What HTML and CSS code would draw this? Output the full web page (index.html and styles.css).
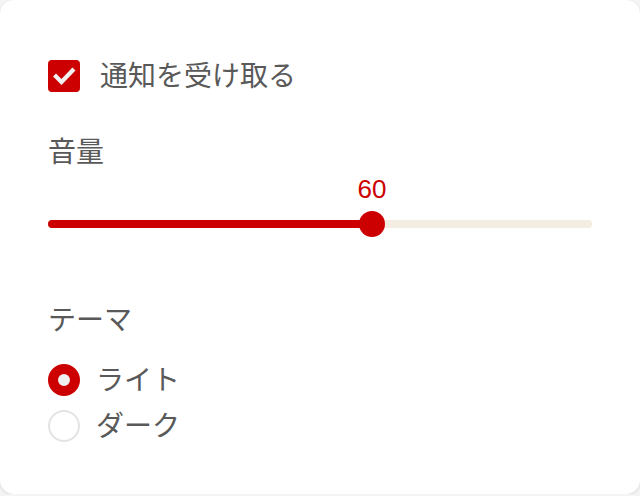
FILE: index.html
```html
<!DOCTYPE html>
<html lang="ja">
<head>
<meta charset="utf-8">
<link rel="stylesheet" href="styles.css">
</head>
<body>
<div class="card">
  <label class="check-row">
    <span class="checkbox">
      <svg viewBox="0 0 32 32" width="32" height="32"><path d="M8 16.5 L13.5 22 L24.5 10.5" fill="none" stroke="#f2f2f2" stroke-width="4.2" stroke-linecap="square"/></svg>
    </span>
    <span class="label">通知を受け取る</span>
  </label>

  <div class="section-title vol-title">音量</div>
  <div class="slider">
    <div class="value" style="margin-left:calc(12px + 0.6 * (100% - 24px))"><span>60</span></div>
    <div class="track">
      <div class="fill" style="width:calc(12px + 0.6 * (100% - 24px))"></div>
      <div class="thumb" style="left:calc(12px + 0.6 * (100% - 24px))"></div>
    </div>
  </div>

  <div class="section-title theme-title">テーマ</div>
  <div class="radios">
    <div class="radio-row"><span class="radio on"></span><span class="label">ライト</span></div>
    <div class="radio-row"><span class="radio"></span><span class="label">ダーク</span></div>
  </div>
</div>
</body>
</html>
```
FILE: styles.css
```css
html, body { margin: 0; padding: 0; }
body {
  background: #f4f4f4;
  font-family: "Noto Sans CJK JP", "Noto Sans", sans-serif;
  color: #595959;
}
.card {
  box-sizing: border-box;
  width: 640px;
  height: 494px;
  background: #fff;
  border-radius: 14px;
  box-shadow: 0 1px 3px rgba(0,0,0,0.12);
  padding: 60px 48px 0 48px;
}
.check-row {
  display: flex;
  align-items: center;
  height: 32px;
  gap: 20px;
}
.checkbox {
  width: 32px; height: 32px;
  border-radius: 4px;
  background: #cc0000;
  display: block;
}
.checkbox svg { display: block; }
.label {
  font-size: 28px;
  line-height: 32px;
  color: #595959;
  position: relative;
  top: -2px;
}
.section-title {
  font-size: 28px;
  line-height: 32px;
  color: #595959;
}
.vol-title { margin-top: 42px; }
.slider { margin-top: 8px; width: 544px; }
.value {
  font-family: "Liberation Sans", Arial, sans-serif;
  color: #cc0000;
  font-size: 26px;
  line-height: 30px;
  width: 0;
  display: flex;
  justify-content: center;
  white-space: nowrap;
}
.track {
  position: relative;
  margin-top: 16px;
  height: 8px;
  border-radius: 4px;
  background: #f3ede2;
}
.fill {
  height: 8px;
  border-radius: 4px;
  background: #cc0000;
}
.thumb {
  position: absolute;
  top: 50%;
  width: 26px; height: 26px;
  border-radius: 50%;
  background: #cc0000;
  transform: translate(-50%, -50%);
}
.theme-title { margin-top: 74px; }
.radios { margin-top: 30px; display: flex; flex-direction: column; gap: 14px; }
.radio-row { display: flex; align-items: center; gap: 16px; height: 32px; }
.radio {
  box-sizing: border-box;
  width: 32px; height: 32px;
  border-radius: 50%;
  border: 2px solid #e3e3e3;
  background: #fff;
}
.radio.on {
  border: 10px solid #cc0000;
  background: #f0f0f0;
}
```
